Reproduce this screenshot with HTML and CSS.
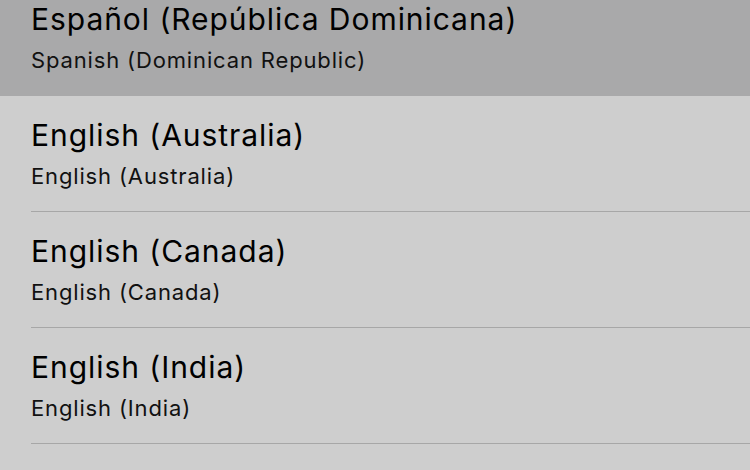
FILE: index.html
```html
<!DOCTYPE html>
<html lang="en">
<head>
<meta charset="utf-8">
<link rel="stylesheet" href="styles.css">
</head>
<body>
<ul class="list">
  <li class="row selected"><div class="cell"><div class="title">Español (República Dominicana)</div><div class="subtitle">Spanish (Dominican Republic)</div></div></li>
  <li class="row"><div class="cell"><div class="title">English (Australia)</div><div class="subtitle">English (Australia)</div></div></li>
  <li class="row"><div class="cell"><div class="title">English (Canada)</div><div class="subtitle">English (Canada)</div></div></li>
  <li class="row"><div class="cell"><div class="title">English (India)</div><div class="subtitle">English (India)</div></div></li>
  <li class="row"><div class="cell"><div class="title">English (Ireland)</div><div class="subtitle">English (Ireland)</div></div></li>
</ul>
</body>
</html>
```
FILE: styles.css
```css
html, body {
  margin: 0;
  padding: 0;
  background: #cecece;
  overflow: hidden;
  height: 470px;
}
body {
  font-family: Inter, "Noto Sans", sans-serif;
  color: #000;
}
.list {
  list-style: none;
  margin: -20px 0 0 0;
  padding: 0;
}
.row {
  height: 116px;
  padding-left: 31px;
  box-sizing: border-box;
  background: #cecece;
}
.row.selected {
  background: #a9a9aa;
}
.cell {
  height: 116px;
  box-sizing: border-box;
  border-bottom: 1px solid #a7a7a7;
  padding-top: 21px;
}
.row.selected .cell {
  border-bottom-color: transparent;
}
.title {
  font-size: 30px;
  line-height: 36px;
  letter-spacing: 0.95px;
  white-space: nowrap;
}
.subtitle {
  font-size: 22px;
  line-height: 26px;
  margin-top: 10px;
  letter-spacing: 0.85px;
  color: #111;
  white-space: nowrap;
}
```
